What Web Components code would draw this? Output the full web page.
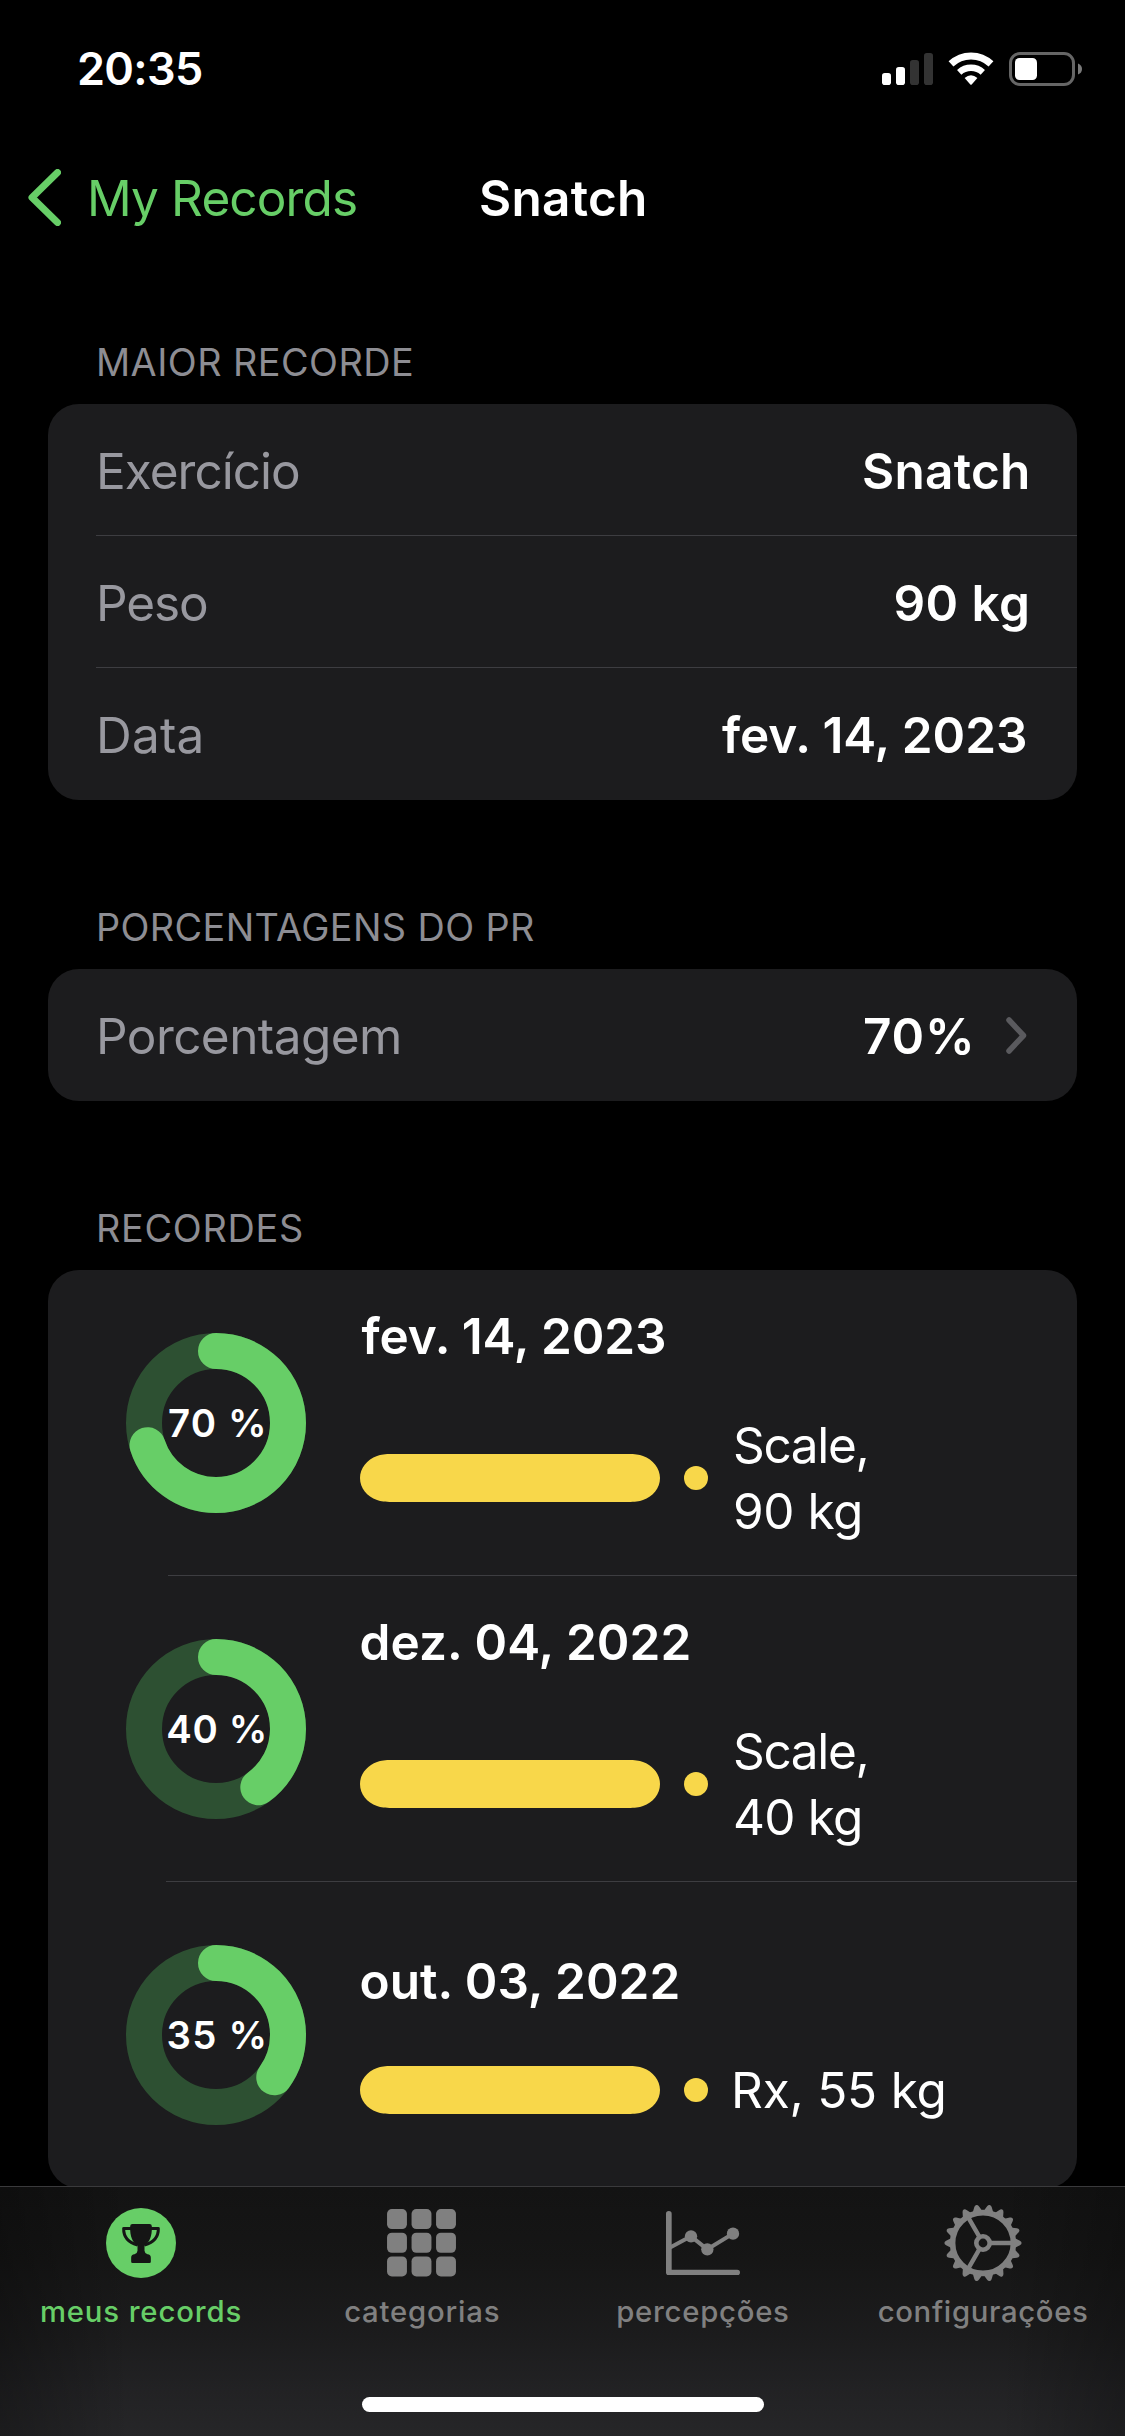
<!DOCTYPE html>
<html lang="pt-BR">
<head>
<meta charset="utf-8">
<title>Snatch</title>
<style>
  html, body { margin: 0; background: #000; }
  body { width: 1125px; height: 2436px; overflow: hidden; font-family: Inter, "Liberation Sans", sans-serif; color: #fff; }
</style>
</head>
<body>
<records-screen></records-screen>
<script>
const make = (name, html, setup) => {
  const tpl = document.createElement('template');
  tpl.innerHTML = html;
  customElements.define(name, class extends HTMLElement {
    connectedCallback() {
      if (this.shadowRoot) return;
      this.attachShadow({ mode: 'open' }).append(tpl.content.cloneNode(true));
      if (setup) setup(this, this.shadowRoot);
    }
  });
};

/* A single line of text tracked so that its ink spans exactly `w` pixels. */
const pen = document.createElement('canvas').getContext('2d');
make('fit-text', `<style>
  :host { display: block; flex: none; white-space: pre; }
  span { display: inline-block; }
</style><span><slot></slot></span>`, (el, root) => {
  const text = el.textContent, cs = getComputedStyle(el), w = +el.getAttribute('w');
  pen.font = `${cs.fontWeight} ${cs.fontSize} ${cs.fontFamily}`;
  const m = pen.measureText(text);
  const ink = m.actualBoundingBoxLeft + m.actualBoundingBoxRight;
  el.style.width = w + 'px';
  const span = root.querySelector('span');
  span.style.letterSpacing = ((w - ink) / (text.length - 1)).toFixed(3) + 'px';
  span.style.marginLeft = m.actualBoundingBoxLeft.toFixed(2) + 'px';
});

make('status-bar', `<style>
  :host { display: flex; justify-content: space-between; align-items: flex-start; height: 132px; padding: 0 43px 0 79px; box-sizing: border-box; }
  fit-text { font-size: 45px; font-weight: 600; line-height: 54px; margin-top: 42px; }
  svg { display: block; margin-top: 52px; }
</style>
<fit-text w="123">20:35</fit-text>
<svg width="200" height="34" viewBox="0 0 200 34">
  <g fill="#fff">
    <rect x="0" y="21" width="9" height="12" rx="2.8"/>
    <rect x="14" y="15" width="9" height="18" rx="2.8"/>
    <g fill="#333"><rect x="28" y="8" width="9" height="25" rx="2.8"/><rect x="42" y="1" width="9" height="32" rx="2.8"/></g>
    <rect x="133" y="6" width="22" height="22" rx="4.5"/>
  </g>
  <g fill="none" stroke="#fff">
    <path d="M69 11.9 A29 29 0 0 1 109 11.9" stroke-width="7"/>
    <path d="M77.2 20.3 A17.5 17.5 0 0 1 100.800 20.3" stroke-width="6.400"/>
  </g>
  <path d="M82.600 26 Q89 20.500 95.400 26 L89.700 32.500 Q89 33.200 88.300 32.500Z" fill="#fff"/>
  <rect x="128.500" y="1.500" width="63" height="31" rx="9.500" fill="none" stroke="#666" stroke-width="3"/>
  <path d="M196 11.500 Q200 13 200 17 T196 22.500Z" fill="#7a7a7a"/>
</svg>`);

make('nav-bar', `<style>
  :host { display: grid; grid-template-columns: 1fr auto 1fr; align-items: center; height: 132px; font-size: 49.5px; line-height: 60px; }
  .back { display: flex; align-items: center; gap: 30px; padding-left: 28px; color: #67ce67; }
  .title { font-weight: 600; }
  svg { display: block; margin-top: -1px; }
</style>
<div class="back">
  <svg width="33" height="57" viewBox="0 0 33 57"><path d="M29.500 3.500 L4 28.500 L29.500 53.500" fill="none" stroke="currentColor" stroke-width="7" stroke-linecap="round" stroke-linejoin="round"/></svg>
  <fit-text w="265">My Records</fit-text>
</div>
<fit-text class="title" w="163">Snatch</fit-text>
<span></span>`);

make('list-section', `<style>
  :host { display: block; padding: 0 48px; margin-top: 103px; }
  :host([first]) { margin-top: 74px; }
  header { padding: 0 51px; margin-bottom: 18px; font-size: 37.8px; line-height: 48px; color: #8d8d93; }
  .card { background: #1c1c1e; border-radius: 31px; overflow: hidden; }
</style>
<header><slot name="title"></slot></header>
<div class="card"><slot></slot></div>`);

make('info-row', `<style>
  :host { display: flex; align-items: center; justify-content: space-between; height: 132px; box-sizing: border-box; padding: 2px 50px 0 52px; font-size: 49.5px; line-height: 60px; color: #98989f; background: linear-gradient(#3d3d41, #3d3d41) no-repeat 48px 100% / 100% 1px; }
  :host([last]) { background: none; }
  .value { display: flex; align-items: center; gap: 36px; color: #fff; font-weight: 600; }
  svg { display: none; margin-top: -2px; }
  :host([link]) svg { display: block; }
</style>
<slot name="label"></slot>
<div class="value"><slot></slot>
<svg width="21" height="37" viewBox="0 0 21 37"><path d="M3 3 L17.500 18.500 L3 34" fill="none" stroke="#5a5a5e" stroke-width="5.500" stroke-linecap="round" stroke-linejoin="round"/></svg></div>`);

make('progress-ring', `<style>
  :host { display: grid; place-items: center; width: 180px; height: 180px; flex: none; font-size: 38.400px; font-weight: 600; line-height: 46px; }
  svg, div { grid-area: 1 / 1; display: block; }
  circle { fill: none; stroke: #67ce67; stroke-width: 36; }
</style>
<svg width="180" height="180" viewBox="0 0 180 180">
  <circle cx="90" cy="90" r="72" style="stroke:#2d5032"/>
  <circle class="arc" cx="90" cy="90" r="72" pathLength="100" stroke-linecap="round" transform="rotate(-90 90 90)"/>
</svg>
<div><slot></slot></div>`, (el, root) => {
  root.querySelector('.arc').setAttribute('stroke-dasharray', el.getAttribute('value') + ' 100');
});

make('record-row', `<style>
  :host { display: flex; align-items: center; gap: 54px; height: 306px; padding-left: 78px; box-sizing: border-box; background: linear-gradient(#3d3d41, #3d3d41) no-repeat var(--inset, 119px) 100% / 100% 1px; }
  :host([last]) { background: none; }
  .body { display: flex; flex-direction: column; gap: 46px; padding-top: 4px; font-size: 49.5px; }
  .date { font-weight: 600; line-height: 60px; padding-left: 1.5px; }
  .detail { display: flex; align-items: center; line-height: 66px; }
  .bar { display: block; width: 300px; height: 48px; fill: #f8d74a; }
  .dot { width: 24px; height: 24px; border-radius: 50%; background: #f8d74a; margin: 0 27px 0 24px; }
</style>
<slot name="ring"></slot>
<div class="body">
  <div class="date"><slot name="date"></slot></div>
  <div class="detail"><svg class="bar" viewBox="0 0 300 48"><path d="M32 0H268C275 0 279 .4 283 1.900C293 5.500 300 14 300 24S293 42.500 283 46.100C279 47.600 275 48 268 48H32C25 48 21 47.600 17 46.100C7 42.500 0 34 0 24S7 5.500 17 1.900C21 .4 25 0 32 0Z"/></svg><div class="dot"></div><div><slot></slot></div></div>
</div>`);

make('tab-item', `<style>
  :host { display: flex; flex: 1 1 0; flex-direction: column; align-items: center; gap: 11px; color: #808080; font-size: 29.3px; font-weight: 500; line-height: 36px; }
  :host([active]) { color: #67ce67; }
  .icon { display: flex; align-items: center; height: 80px; }
</style>
<div class="icon"><slot name="icon"></slot></div>
<slot></slot>`);

make('tab-icon', `<style>:host, svg { display: block; }</style><div></div>`, (el, root) => {
  const icons = {
    trophy: () => `<svg width="70" height="70" viewBox="29.5 39 210 210">
      <circle cx="134.500" cy="144" r="105" fill="currentColor"/>
      <path fill="#151515" d="M109 87H160Q167 87 167 94C168 125 160 142 145 152V167Q146 176 154 178Q164 179 164 188V200Q164 204 160 204H109Q105 204 105 200V188Q105 179 115 178Q123 176 124 167V152C109 142 101 125 102 94Q102 87 109 87Z"/>
      <path fill="none" stroke="#151515" stroke-width="9" stroke-linejoin="round" d="M105 100.500H82.500C82 122 92 141 124 150M164 100.500H186.500C187 122 177 141 145 150"/></svg>`,
    grid: () => {
      let cells = '';
      for (let r = 0; r < 3; r++) for (let c = 0; c < 3; c++)
        cells += `<rect x="${c * 24.4}" y="${r * 23.6}" width="19.8" height="20" rx="4.800"/>`;
      return `<svg width="69" height="67.5" viewBox="0 0 68.6 67.2" fill="currentColor">${cells}</svg>`;
    },
    chart: () => `<svg width="74" height="64.33" viewBox="33 47 222 193" fill="none" stroke="currentColor" stroke-linecap="round" stroke-linejoin="round">
      <path stroke-width="17" d="M41.500 55.500V231.500H246.500"/>
      <path stroke-width="12" d="M44 157L108 123L157 162L234 115"/>
      <g fill="currentColor" stroke="none"><circle cx="108" cy="123" r="18.500"/><circle cx="157" cy="162" r="18.500"/><circle cx="234" cy="115" r="18.500"/></g></svg>`,
    gear: () => {
      let teeth = '';
      for (let i = 0; i < 18; i++)
        teeth += `<path transform="rotate(${i * 20})" fill="currentColor" d="M31 -5.200L36.900 -2.300Q38.600 -1.500 38.600 0T36.900 2.300L31 5.200Z"/>`;
      return `<svg width="78" height="78" viewBox="-39 -39 78 78" fill="none" stroke="currentColor">
        <g stroke="none">${teeth}</g>
        <circle r="30.400" stroke-width="5.600"/><circle r="6.700" stroke-width="4.600"/>
        <path stroke-width="4.400" d="M8 0H29M-4 6.930L-14.500 25.100M-4 -6.930L-14.500 -25.100"/></svg>`;
    }
  };
  root.querySelector('div').innerHTML = icons[el.getAttribute('name')]();
});

make('tab-bar', `<style>
  :host { display: flex; flex-direction: column; justify-content: space-between; align-items: center; position: relative; z-index: 1; height: 250px; margin-top: -2px; padding: 16px 0 24px; box-sizing: border-box; border-top: 1px solid #3a3a3c;
    background: linear-gradient(90deg, rgba(0,0,0,.28), transparent 130px, transparent 1000px, rgba(0,0,0,.24)), linear-gradient(#131313, #161616 30%, #1c1c1d 60%, #222224 82%, #262628); }
  nav { display: flex; width: 100%; }
  ::slotted(tab-item:first-child) { margin: 0 -.5px 0 .5px; }
  ::slotted(tab-item:last-child) { margin: 0 1.5px 0 -1.5px; }
  .home { width: 402px; height: 15px; border-radius: 8px; background: #fff; }
</style>
<nav><slot></slot></nav>
<div class="home"></div>`);

make('records-screen', `<style>
  :host { display: flex; flex-direction: column; height: 2436px; }
</style>
<status-bar></status-bar>
<nav-bar></nav-bar>
<list-section first>
  <fit-text slot="title" w="313">MAIOR RECORDE</fit-text>
  <info-row><fit-text slot="label" w="199">Exercício</fit-text><fit-text w="163">Snatch</fit-text></info-row>
  <info-row><fit-text slot="label" w="107">Peso</fit-text><fit-text w="131.5">90 kg</fit-text></info-row>
  <info-row last><fit-text slot="label" w="100.5">Data</fit-text><fit-text w="305">fev. 14, 2023</fit-text></info-row>
</list-section>
<list-section>
  <fit-text slot="title" w="435">PORCENTAGENS DO PR</fit-text>
  <info-row last link><fit-text slot="label" w="299">Porcentagem</fit-text><fit-text w="105">70%</fit-text></info-row>
</list-section>
<list-section>
  <fit-text slot="title" w="203">RECORDES</fit-text>
  <record-row style="--inset: 120px">
    <progress-ring slot="ring" value="70"><fit-text w="94">70 %</fit-text></progress-ring>
    <fit-text slot="date" w="304.5">fev. 14, 2023</fit-text>
    <fit-text w="131.5">Scale,</fit-text><fit-text w="125">90 kg</fit-text>
  </record-row>
  <record-row style="--inset: 118px">
    <progress-ring slot="ring" value="40"><fit-text w="95.5">40 %</fit-text></progress-ring>
    <fit-text slot="date" w="329">dez. 04, 2022</fit-text>
    <fit-text w="131.5">Scale,</fit-text><fit-text w="125">40 kg</fit-text>
  </record-row>
  <record-row last>
    <progress-ring slot="ring" value="35"><fit-text w="95">35 %</fit-text></progress-ring>
    <fit-text slot="date" w="318">out. 03, 2022</fit-text>
    <fit-text w="208.5">Rx, 55 kg</fit-text>
  </record-row>
</list-section>
<tab-bar>
  <tab-item active><tab-icon slot="icon" name="trophy"></tab-icon><fit-text w="198.5">meus records</fit-text></tab-item>
  <tab-item><tab-icon slot="icon" name="grid"></tab-icon><fit-text w="153.500">categorias</fit-text></tab-item>
  <tab-item><tab-icon slot="icon" name="chart"></tab-icon><fit-text w="170">percepções</fit-text></tab-item>
  <tab-item><tab-icon slot="icon" name="gear"></tab-icon><fit-text w="208.500">configurações</fit-text></tab-item>
</tab-bar>`);
</script>
</body>
</html>
